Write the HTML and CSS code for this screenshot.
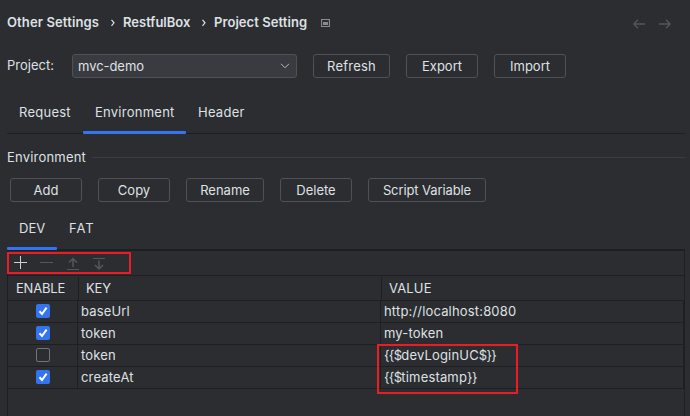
FILE: index.html
```html
<!DOCTYPE html>
<html lang="en">
<head>
<meta charset="utf-8">
<title>Project Setting</title>
<link rel="stylesheet" href="styles.css">
</head>
<body>
<header class="crumbs">
  <span class="c1">Other Settings</span>
  <svg class="sep" width="4" height="8" viewBox="0 0 4 8"><path d="M.5 .8 3 3.8 .5 6.8"/></svg>
  <span class="c2">RestfulBox</span>
  <svg class="sep" width="4" height="8" viewBox="0 0 4 8"><path d="M.5 .8 3 3.8 .5 6.8"/></svg>
  <span class="c3">Project Setting</span>
  <svg class="win" width="9" height="8" viewBox="0 0 9 8"><path d="M.5.5h8v7h-8z"/><path class="fill" d="M2 3h5v3H2z"/></svg>
  <nav class="history">
    <svg width="12" height="10" viewBox="0 0 12 10"><path d="M12 5H1M5 .8.8 5 5 9.2"/></svg>
    <svg width="12" height="10" viewBox="0 0 12 10"><path d="M0 5h11M7 .8 11.2 5 7 9.2"/></svg>
  </nav>
</header>
<section class="project">
  <label>Project:</label>
  <div class="select"><span>mvc-demo</span><svg width="10" height="6" viewBox="0 0 10 6"><path d="M1 .8 5 4.8 9 .8"/></svg></div>
  <button class="w77">Refresh</button>
  <button>Export</button>
  <button>Import</button>
</section>
<nav class="tabs main">
  <a>Request</a><a class="on">Environment</a><a>Header</a>
</nav>
<h2 class="group">Environment</h2>
<section class="actions">
  <button>Add</button>
  <button>Copy</button>
  <button class="w78">Rename</button>
  <button>Delete</button>
  <button class="w118">Script Variable</button>
</section>
<nav class="tabs envs">
  <a class="on">DEV</a><a class="fat">FAT</a>
</nav>
<main class="panel">
  <div class="toolbar">
    <svg width="14" height="14" viewBox="0 0 14 14"><path class="lit" d="M7.5 1v13M1 7.5h13"/></svg>
    <svg width="14" height="14" viewBox="0 0 14 14"><path d="M1 7.5h13"/></svg>
    <svg width="14" height="15" viewBox="0 0 14 15"><path d="M2 14.5h12"/><path class="arrow" d="M8 12V4M4 7.5l4-4 4 4"/></svg>
    <svg width="14" height="15" viewBox="0 0 14 15"><path d="M2 3.5h12"/><path class="arrow" d="M8 5.500v8M4 10l4 4 4-4"/></svg>
    <div class="mark tools"></div>
  </div>
  <div class="row head"><span>ENABLE</span><span>KEY</span><span class="value">VALUE</span></div>
  <div class="body">
    <div class="row"><span><i class="check on"><svg width="14" height="14" viewBox="0 0 14 14"><path d="M3.500 7.300 6 10l4.600-6.400"/></svg></i></span><span>baseUrl</span><span>http://localhost:8080</span></div>
    <div class="row"><span><i class="check on"><svg width="14" height="14" viewBox="0 0 14 14"><path d="M3.500 7.300 6 10l4.600-6.400"/></svg></i></span><span>token</span><span>my-token</span></div>
    <div class="row"><span><i class="check"></i></span><span>token</span><span><b>{{$</b>devLoginUC<b>$}}</b></span></div>
    <div class="row"><span><i class="check on"><svg width="14" height="14" viewBox="0 0 14 14"><path d="M3.500 7.300 6 10l4.600-6.400"/></svg></i></span><span>createAt</span><span><b>{{$</b>timestamp<b>}}</b></span></div>
    <div class="mark values"></div>
  </div>
</main>
</body>
</html>
```
FILE: styles.css
```css
* { box-sizing: border-box; }
body {
  margin: 0;
  height: 416px;
  overflow: hidden;
  padding: 0 5px 0 7px;
  background: #2b2d30;
  color: #dfe1e5;
  font: 13px/16px Inter, sans-serif;
  letter-spacing: .25px;
  display: flex;
  flex-direction: column;
}
svg { display: block; fill: none; flex: none; }
.crumbs { height: 54px; padding-top: 14px; display: flex; align-items: flex-start; font-weight: 600; letter-spacing: 0; }
.crumbs span { white-space: nowrap; flex: none; }
.c1 { width: 104px; letter-spacing: .13px; }
.c2 { width: 79px; }
.c3 { width: 107px; letter-spacing: .07px; }
.sep { margin: 5px 8px 0 0; stroke: #dfe1e5; stroke-width: 1.2; }
.win { margin-top: 5px; stroke: #868a91; stroke-width: 1.2; }
.win .fill { fill: #868a91; stroke: none; }
.history { display: flex; gap: 14px; margin: 5px 14px 0 auto; stroke: #55575b; stroke-width: 1.3; }
.project { display: flex; height: 24px; gap: 16px; align-items: center; letter-spacing: 0; }
.project label { width: 49px; position: relative; top: -1px; }
.select { width: 225px; height: 24px; border: 1px solid #4e5157; border-radius: 3px; background: #393b40; display: flex; align-items: center; justify-content: space-between; padding: 0 6px 0 5px; letter-spacing: -.05px; }
.select svg { stroke: #b4b8bf; }
button { width: 72px; height: 24px; padding: 0; border: 1px solid #4e5157; border-radius: 3px; background: transparent; color: inherit; font: inherit; letter-spacing: 0; flex: none; }
.w77 { width: 77px; letter-spacing: .2px; }
.w78 { width: 78px; }
.w118 { width: 118px; letter-spacing: -.1px; }
.tabs { display: flex; flex: none; border-bottom: 1px solid #1e1f22; width: 678px; }
.tabs a { padding: 0 12px; }
.tabs .on { position: relative; }
.tabs .on::after { content: ""; position: absolute; left: 0; right: 0; bottom: -1px; height: 3px; border-radius: 1px; background: #3574f0; }
.main { height: 41px; margin-top: 15px; line-height: 39px; }
.main a:nth-child(1) { width: 76px; }
.main a:nth-child(2) { width: 103px; }
.group { margin: 15px 0 0; font: inherit; letter-spacing: .2px; height: 16px; display: flex; align-items: center; gap: 6px; flex: none; }
.group::after { content: ""; height: 1px; background: #3a3c40; flex: 1; }
.actions { display: flex; gap: 16px; margin: 13px 0 0 3px; flex: none; }
.envs { height: 48px; line-height: 52px; letter-spacing: 0; }
.envs a { width: 50px; white-space: nowrap; }
.envs .fat { letter-spacing: .9px; }
.panel { width: 678px; flex: 1; border: 1px solid #1e1f22; border-bottom: 0; }
.toolbar { position: relative; height: 25px; border-bottom: 1px solid #1e1f22; display: flex; align-items: flex-start; gap: 12px; padding: 4px 0 0 5px; }
.toolbar svg { stroke: #55575b; }
.toolbar .arrow { stroke-width: 1.5; }
.toolbar .lit { stroke: #ced0d6; }
.row { display: grid; grid-template-columns: 69px 303px 1fr; height: 22px; border-bottom: 1px solid #1e1f22; line-height: 21px; letter-spacing: .17px; }
.row span { padding-left: 3px; border-left: 1px solid #1e1f22; white-space: nowrap; }
.row b { font-weight: inherit; letter-spacing: -.7px; }
.row span:first-child { border: 0; padding: 3px 0 0 28px; }
.head { height: 25px; padding: 1px 0; line-height: 23px; grid-template-columns: 70px 303px 1fr; letter-spacing: -.2px; }
.head span { padding-left: 7px; }
.head span:first-child { padding: 0 0 0 8px; }
.head .value { letter-spacing: .15px; }
.body { position: relative; border-right: 1px solid #1e1f22; }
.check { display: block; width: 14px; height: 14px; border: 1px solid #6f737a; border-radius: 2px; }
.check.on { border: 0; background: #3574f0; }
.check svg { stroke: #fff; stroke-width: 2; }
.mark { position: absolute; border: 2px solid #ed1c24; }
.tools { left: -1px; top: 1px; width: 124px; height: 22px; }
.values { left: 369px; top: 43px; width: 141px; height: 50px; }
```
